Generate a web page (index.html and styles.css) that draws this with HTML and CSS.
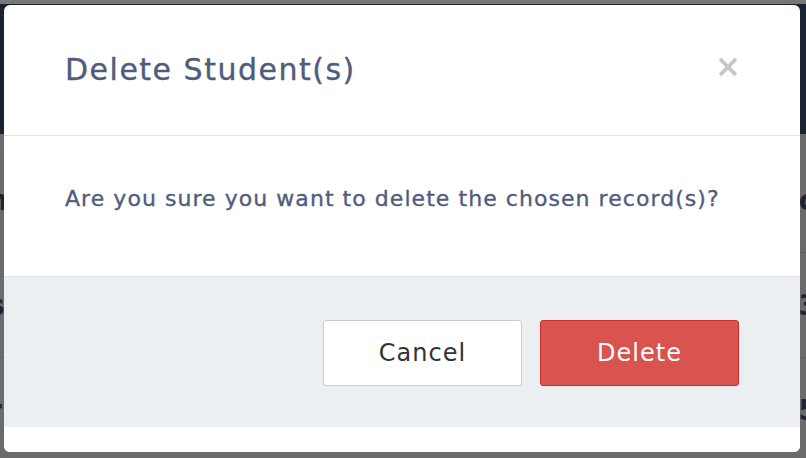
FILE: index.html
```html
<!DOCTYPE html>
<html>
<head>
<meta charset="utf-8">
<link rel="stylesheet" href="styles.css">
</head>
<body>
<div class="page">
  <div class="topbar"></div>
  <div class="navband"></div>
  <div class="rows">
    <div class="row"><span>n</span><span>o</span></div>
    <div class="row"><span>s</span><span>3</span></div>
    <div class="row"><span>r</span><span>5</span></div>
  </div>
</div>
<div class="modal">
  <div class="modal-header">
    <h1 class="modal-title">Delete Student(s)</h1>
    <span class="close" aria-label="Close">
      <svg width="20" height="20" viewBox="0 0 20 20"><path d="M2 2 L18 18 M18 2 L2 18" stroke="#c6c6c6" stroke-width="3.8" fill="none"/></svg>
    </span>
  </div>
  <div class="modal-body">
    <p>Are you sure you want to delete the chosen record(s)?</p>
  </div>
  <div class="modal-footer">
    <button class="btn btn-cancel">Cancel</button>
    <button class="btn btn-delete">Delete</button>
  </div>
  <div class="modal-bottom"></div>
</div>
</body>
</html>
```
FILE: styles.css
```css
html, body {
  margin: 0;
  padding: 0;
}
body {
  width: 806px;
  height: 458px;
  overflow: hidden;
  background: #6b6b6b;
  font-family: "DejaVu Sans", "Liberation Sans", sans-serif;
  position: relative;
}
.page {
  display: flex;
  flex-direction: column;
}
.topbar {
  height: 4px;
  background: #777777;
}
.navband {
  height: 130px;
  background: #1b2333;
}
.rows {
  display: flex;
  flex-direction: column;
  padding-top: 14px;
}
.row {
  height: 104px;
  display: flex;
  justify-content: space-between;
  align-items: center;
  border-bottom: 1px solid #616161;
  margin: 0 -12px;
  font-size: 28px;
  font-weight: 700;
  color: #1e2433;
}
.modal {
  position: absolute;
  left: 4px;
  top: 5px;
  width: 796px;
  height: 447px;
  background: #ffffff;
  border-radius: 6px;
  overflow: hidden;
  display: flex;
  flex-direction: column;
}
.modal-header {
  height: 131px;
  box-sizing: border-box;
  border-bottom: 1px solid #e2e2e2;
  display: flex;
  align-items: flex-start;
  justify-content: space-between;
  padding: 47px 62px 0 61px;
}
.modal-title {
  margin: 0;
  font-size: 30px;
  line-height: 36px;
  letter-spacing: 1.5px;
  font-weight: 400;
  color: #505c7c;
  -webkit-text-stroke: 0.35px #505c7c;
}
.close {
  display: flex;
  margin-top: 5px;
}
.modal-body {
  height: 141px;
  box-sizing: border-box;
  border-bottom: 1px solid #e2e4e6;
  padding: 51px 61px 0;
}
.modal-body p {
  margin: 0;
  font-size: 22px;
  line-height: 24px;
  letter-spacing: 1.05px;
  color: #505c7c;
  -webkit-text-stroke: 0.35px #505c7c;
}
.modal-footer {
  height: 150px;
  box-sizing: border-box;
  padding: 2px 61px 0;
  background: #eceff1;
  display: flex;
  justify-content: flex-end;
  align-items: center;
  gap: 18px;
}
.btn {
  width: 199px;
  height: 66px;
  border-radius: 3px;
  font-family: "DejaVu Sans", "Liberation Sans", sans-serif;
  font-size: 24px;
  letter-spacing: 1px;
  cursor: pointer;
}
.btn-cancel {
  background: #ffffff;
  border: 1px solid #cccccc;
  color: #333333;
}
.btn-delete {
  background: #d9534f;
  border: 1px solid #c9302c;
  color: #ffffff;
}
.modal-bottom {
  flex: 1;
  background: #ffffff;
}
```
